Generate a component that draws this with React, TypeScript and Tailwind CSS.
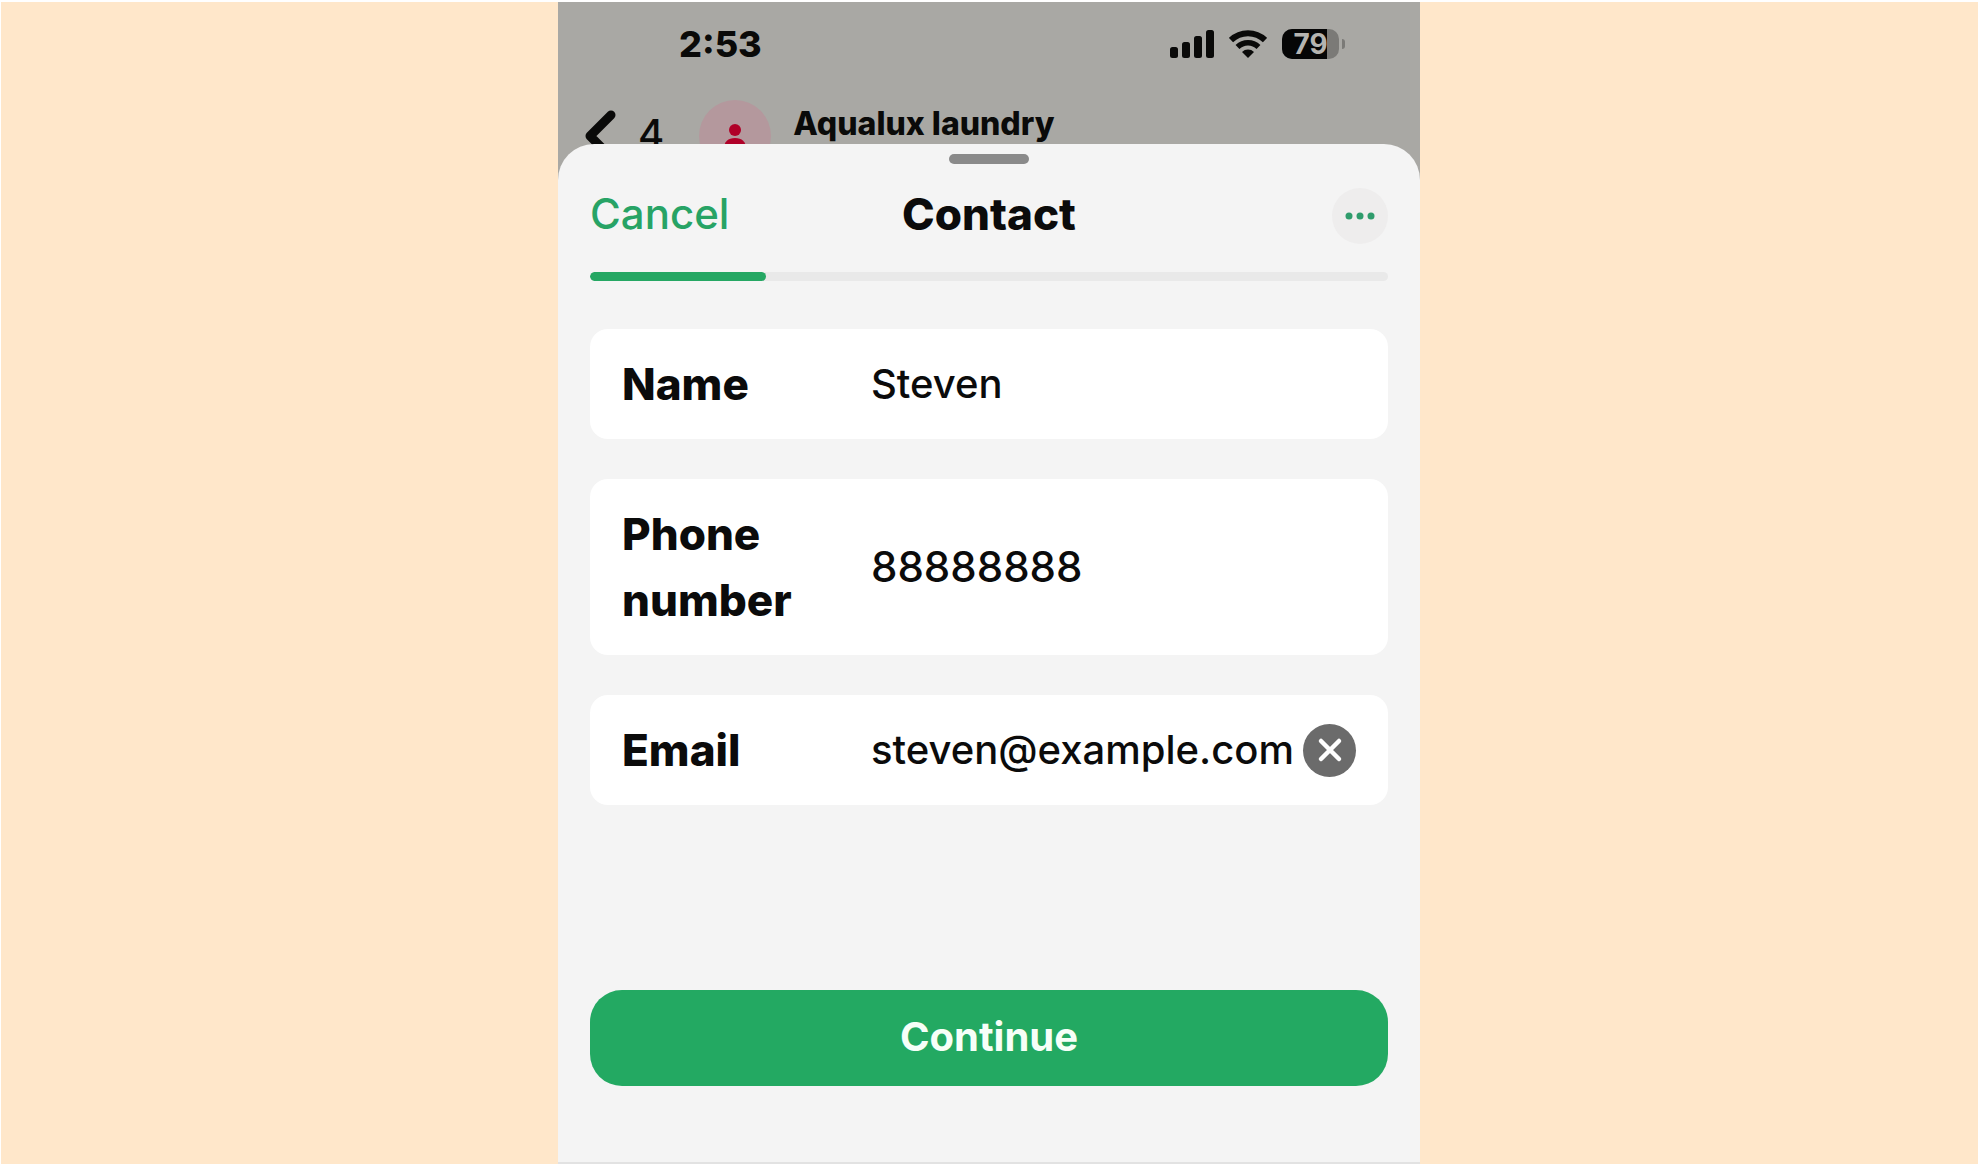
import { useState } from 'react';

function SignalIcon() {
  return (
    <svg width="44" height="28" viewBox="0 0 44 28" fill="#0a0a09" aria-hidden="true">
      <rect x="0" y="17" width="8" height="11" rx="2.5" />
      <rect x="12" y="12" width="8" height="16" rx="2.5" />
      <rect x="24" y="6" width="8" height="22" rx="2.5" />
      <rect x="36" y="0" width="8" height="28" rx="2.5" />
    </svg>
  );
}

function WifiIcon() {
  return (
    <svg width="38" height="28" viewBox="0 0 38 28" fill="none" aria-hidden="true">
      <path d="M2 10a24.500 24.500 0 0 1 34 0" stroke="#0a0a09" strokeWidth="6" />
      <path d="M8.500 17a15 15 0 0 1 21 0" stroke="#0a0a09" strokeWidth="5.500" />
      <path d="M19 28l-6-6a8.500 8.500 0 0 1 12 0z" fill="#0a0a09" />
    </svg>
  );
}

function Battery({ level }: { level: number }) {
  return (
    <div className="flex items-center gap-[3px]">
      <div className="relative flex h-[30px] w-[57px] items-center justify-center rounded-[10px] bg-[#7b7a77]">
        <div className="absolute inset-y-0 left-0 rounded-l-[10px] bg-[#060606]" style={{ width: `${level}%` }} />
        <span className="relative text-[28px] leading-[30px] font-bold text-[#b5b4b0]">{level}</span>
      </div>
      <div className="h-[10px] w-[3px] rounded-r-full bg-[#7b7a77]" />
    </div>
  );
}

function ChatHeader() {
  return (
    <header className="text-[#0a0a09]">
      <div className="flex h-[98px] items-start justify-between pt-6 pr-[75px] pl-[121px]">
        <span className="text-[36px] leading-[36px] font-extrabold">2:53</span>
        <div className="flex h-[35px] items-center gap-[15px]">
          <SignalIcon />
          <WifiIcon />
          <Battery level={79} />
        </div>
      </div>
      <div className="flex h-[72px] items-center pl-[27px]">
        <button type="button" aria-label="Back" className="flex items-center gap-[21px]">
          <svg width="32" height="52" viewBox="0 0 32 52" fill="none" aria-hidden="true">
            <path d="M26 5L5 26l21 21" stroke="#0a0a09" strokeWidth="9" strokeLinecap="round" strokeLinejoin="round" />
          </svg>
          <span className="pb-1 text-[40px] leading-none font-medium">4</span>
        </button>
        <svg className="ml-[35px]" width="72" height="72" viewBox="0 0 72 72" aria-hidden="true">
          <circle cx="36" cy="36" r="36" fill="#b4989d" />
          <circle cx="36" cy="30" r="6" fill="#b00028" />
          <path d="M25 50v-2c0-6 4-10 11-10s11 4 11 10v2z" fill="#b00028" />
        </svg>
        <span className="ml-[22px] self-start pt-1 text-[32px] leading-[40px] font-extrabold">Aqualux laundry</span>
      </div>
    </header>
  );
}

type FieldProps = {
  id: string;
  label: string;
  type: string;
  value: string;
  onChange: (value: string) => void;
  onClear?: () => void;
};

function Field({ id, label, type, value, onChange, onClear }: FieldProps) {
  return (
    <div className="flex items-center rounded-[18px] bg-white px-8 py-[22px]">
      <label htmlFor={id} className="w-[185px] shrink-0 text-[44px] leading-[66px] font-extrabold">
        {label}
      </label>
      <input
        id={id}
        type={type}
        value={value}
        onChange={(e) => onChange(e.target.value)}
        className={`ml-16 h-[54px] min-w-0 flex-1 bg-transparent leading-[54px] font-medium outline-none ${
          type === 'tel' ? 'text-[42px]' : 'text-[40px]'
        }`}
      />
      {onClear && (
        <button
          type="button"
          aria-label={`Clear ${label}`}
          onClick={onClear}
          className="flex size-[53px] shrink-0 items-center justify-center rounded-full bg-[#6b6b6b]"
        >
          <svg width="26" height="26" viewBox="0 0 26 26" aria-hidden="true">
            <path d="M4 4l18 18M22 4L4 22" stroke="#fff" strokeWidth="4.500" strokeLinecap="round" />
          </svg>
        </button>
      )}
    </div>
  );
}

export default function App() {
  const [name, setName] = useState('Steven');
  const [phone, setPhone] = useState('88888888');
  const [email, setEmail] = useState('steven@example.com');

  return (
    <div className="flex min-h-screen flex-col border-t-2 border-l border-white bg-[#ffe7ca] pr-px font-['Inter',sans-serif]">
      <main className="mx-auto flex w-full max-w-[862px] flex-1 flex-col bg-[#a9a8a4]">
        <ChatHeader />
        <section className="relative -mt-7 flex flex-1 flex-col rounded-t-[36px] border-b-2 border-[#e2e2e2] bg-[#f4f4f4] px-8 pt-[10px] text-[#0b0b0b]">
          <div className="mx-auto h-[10px] w-20 rounded-full bg-[#8a8a8a]" />
          <div className="mt-5 grid grid-cols-[1fr_auto_1fr] items-end">
            <button type="button" className="justify-self-start text-[42px] leading-[60px] font-medium text-[#27a365]">
              Cancel
            </button>
            <h1 className="text-[44px] leading-[60px] font-extrabold">Contact</h1>
            <button
              type="button"
              aria-label="More options"
              className="flex size-14 items-center justify-center justify-self-end rounded-full bg-[#eeeded]"
            >
              <svg width="30" height="8" viewBox="0 0 30 8" fill="#2f9c6c" aria-hidden="true">
                <circle cx="4" cy="4" r="3.500" />
                <circle cx="15" cy="4" r="3.500" />
                <circle cx="26" cy="4" r="3.500" />
              </svg>
            </button>
          </div>
          <div
            role="progressbar"
            aria-label="Form progress"
            aria-valuenow={22}
            className="mt-7 h-[9px] overflow-hidden rounded-full bg-[#e9e9e9]"
          >
            <div className="h-full w-[22%] rounded-full bg-[#25a763]" />
          </div>
          <form className="flex flex-col gap-10 pt-12" onSubmit={(e) => e.preventDefault()}>
            <Field id="name" label="Name" type="text" value={name} onChange={setName} />
            <Field id="phone" label="Phone number" type="tel" value={phone} onChange={setPhone} />
            <Field
              id="email"
              label="Email"
              type="email"
              value={email}
              onChange={setEmail}
              onClear={() => setEmail('')}
            />
            <button
              type="submit"
              className="mt-[145px] h-24 rounded-[32px] bg-[#23a962] pb-0.5 text-[40px] font-bold text-[#f6fff8]"
            >
              Continue
            </button>
          </form>
        </section>
      </main>
    </div>
  );
}
